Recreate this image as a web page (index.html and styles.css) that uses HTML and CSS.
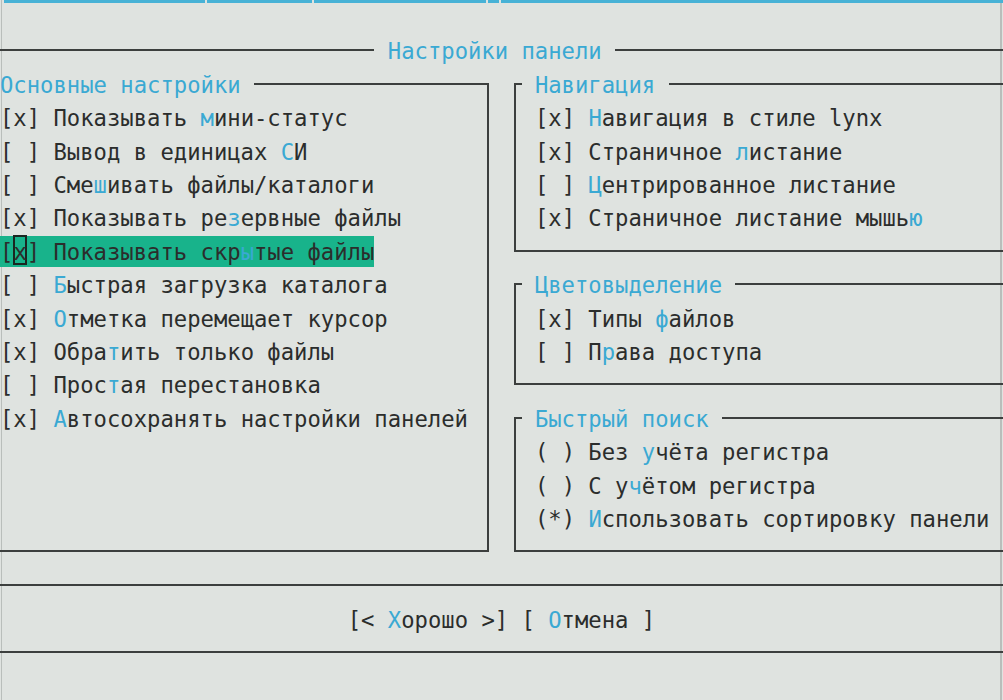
FILE: index.html
```html
<!DOCTYPE html>
<html lang="ru">
<head>
<meta charset="utf-8">
<title>Настройки панели</title>
<link rel="stylesheet" href="styles.css">
</head>
<body>
<div class="screen">
  <div class="strip"><i class="s1"></i><i class="s2"></i><i class="s3"></i><i class="s4"></i><i class="s5"></i></div>

  <div class="titlerow">
    <span class="tline tline-left"></span>
    <span class="dtitle">Настройки панели</span>
    <span class="tline tline-right"></span>
  </div>

  <div class="main">
    <div class="group-left">
      <div class="lhead"><span class="gtitle">Основные настройки</span><span class="lcorner"></span></div>
      <div class="lbody">
        <div class="item">[x] Показывать <b>м</b>ини-статус</div>
        <div class="item">[ ] Вывод в единицах <b>С</b>И</div>
        <div class="item">[ ] Сме<b>ш</b>ивать файлы/каталоги</div>
        <div class="item">[x] Показывать ре<b>з</b>ервные файлы</div>
        <div class="item selrow">[<span class="cur">x</span>] Показывать скр<b>ы</b>тые файлы</div>
        <div class="item">[ ] <b>Б</b>ыстрая загрузка каталога</div>
        <div class="item">[x] <b>О</b>тметка перемещает курсор</div>
        <div class="item">[x] Обра<b>т</b>ить только файлы</div>
        <div class="item">[ ] Прос<b>т</b>ая перестановка</div>
        <div class="item">[x] <b>А</b>втосохранять настройки панелей</div>
      </div>
    </div>

    <div class="rightcol">
      <div class="rgroup">
        <div class="rhead"><span class="rcorner"></span><span class="gtitle">Навигация</span><span class="rline"></span></div>
        <div class="rbody rows4">
          <div class="item">[x] <b>Н</b>авигация в стиле lynx</div>
          <div class="item">[x] Страничное <b>л</b>истание</div>
          <div class="item">[ ] <b>Ц</b>ентрированное листание</div>
          <div class="item">[x] Страничное листание мышь<b>ю</b></div>
        </div>
      </div>
      <div class="rgroup">
        <div class="rhead"><span class="rcorner"></span><span class="gtitle">Цветовыделение</span><span class="rline"></span></div>
        <div class="rbody rows2">
          <div class="item">[x] Типы <b>ф</b>айлов</div>
          <div class="item">[ ] П<b>р</b>ава доступа</div>
        </div>
      </div>
      <div class="rgroup">
        <div class="rhead"><span class="rcorner"></span><span class="gtitle">Быстрый поиск</span><span class="rline"></span></div>
        <div class="rbody rows3">
          <div class="item">( ) Без <b>у</b>чёта регистра</div>
          <div class="item">( ) С у<b>ч</b>ётом регистра</div>
          <div class="item">(*) <b>И</b>спользовать сортировку панели</div>
        </div>
      </div>
    </div>
  </div>

  <div class="sep"></div>
  <div class="buttons">[&lt; <b>Х</b>орошо &gt;] [ <b>О</b>тмена ]</div>
  <div class="sep"></div>
</div>
</body>
</html>
```

FILE: styles.css
```css
:root {
  --cw: 13.373px;
  --rh: 33.42px;
  --tp: 4px;
  --ln: #3c3f3e;
  --fg: #2b2d2c;
  --hk: #3aa9d3;
  --bg: #dfe3e0;
}

html, body {
  margin: 0;
  padding: 0;
}

body {
  background: var(--bg);
  font-family: "DejaVu Sans Mono", monospace;
  font-size: 22.21px;
  color: var(--fg);
  overflow: hidden;
}

.screen {
  width: 1003px;
  height: 700px;
  overflow: hidden;
  background:
    linear-gradient(90deg, transparent 1px, #b9bebb 1px, #b9bebb 2px, transparent 2px),
    linear-gradient(90deg, transparent 1000px, #b9bebb 1000px, #b9bebb 1002px, transparent 1002px),
    var(--bg);
}

b {
  font-weight: normal;
  color: var(--hk);
}

/* top cyan strip */
.strip {
  height: var(--rh);
  display: flex;
  gap: 2px;
  padding-left: 4px;
}
.strip i {
  display: block;
  height: 3px;
  background: #47b2d6;
}
.strip .s1 { width: 201px; }
.strip .s2 { width: 105px; }
.strip .s3 { width: 172px; }
.strip .s4 { width: 11px; }
.strip .s5 { flex: 1; }

/* dialog title row */
.titlerow {
  height: var(--rh);
  display: flex;
  align-items: center;
  white-space: pre;
}
.tline {
  height: 2px;
  background: var(--ln);
}
.tline-left { width: calc(var(--cw) * 28); }
.tline-right { flex: 1; }
.dtitle {
  color: var(--hk);
  margin: 0 var(--cw);
  height: var(--rh);
  box-sizing: border-box;
  padding-top: var(--tp);
  line-height: calc(var(--rh) - var(--tp));
}

.main {
  height: calc(var(--rh) * 15);
  display: flex;
}

.gtitle {
  color: var(--hk);
  white-space: pre;
  box-sizing: border-box;
  padding-top: var(--tp);
  line-height: calc(var(--rh) - var(--tp));
}

.item {
  height: var(--rh);
  box-sizing: border-box;
  padding-top: var(--tp);
  line-height: calc(var(--rh) - var(--tp));
  white-space: pre;
}

/* left group */
.group-left {
  width: calc(var(--cw) * 36.5 + 1px);
  display: flex;
  flex-direction: column;
}
.lhead {
  height: var(--rh);
  display: flex;
}
.lcorner {
  flex: 1;
  margin-left: var(--cw);
  align-self: flex-end;
  height: calc(var(--rh) / 2 + 1px);
  box-sizing: border-box;
  border-top: 2px solid var(--ln);
  border-right: 2px solid var(--ln);
}
.lbody {
  height: calc(var(--rh) * 13.5 + 1px);
  box-sizing: border-box;
  border-right: 2px solid var(--ln);
  border-bottom: 2px solid var(--ln);
}

.selrow {
  width: calc(var(--cw) * 28);
  background: #18b38b;
  background-clip: padding-box;
  border-top: 2px solid transparent;
  padding-top: calc(var(--tp) - 2px);
}
.cur {
  display: inline-block;
  vertical-align: top;
  margin-top: -3px;
  width: var(--cw);
  height: 30px;
  line-height: 35.4px;
  box-shadow: inset 0 0 0 2px #1b2621;
  text-align: center;
}

/* right column */
.rightcol {
  flex: 1;
  margin-left: calc(var(--cw) * 2 - 2px);
  display: flex;
  flex-direction: column;
  gap: calc(var(--rh) / 2 - 1px);
}
.rhead {
  height: var(--rh);
  display: flex;
}
.rcorner {
  width: calc(var(--cw) / 2 + 1px);
  margin-right: var(--cw);
  align-self: flex-end;
  height: calc(var(--rh) / 2 + 1px);
  box-sizing: border-box;
  border-top: 2px solid var(--ln);
  border-left: 2px solid var(--ln);
}
.rline {
  flex: 1;
  margin-left: var(--cw);
  align-self: flex-end;
  height: calc(var(--rh) / 2 + 1px);
  box-sizing: border-box;
  border-top: 2px solid var(--ln);
}
.rbody {
  box-sizing: border-box;
  border-left: 2px solid var(--ln);
  border-bottom: 2px solid var(--ln);
  padding-left: calc(var(--cw) * 1.5 - 1px);
}
.rows4 { height: calc(var(--rh) * 4.5 + 1px); }
.rows2 { height: calc(var(--rh) * 2.5 + 1px); }
.rows3 { height: calc(var(--rh) * 3.5 + 1px); }

/* separators and buttons */
.sep {
  height: var(--rh);
  display: flex;
  align-items: center;
}
.sep::before {
  content: "";
  flex: 1;
  height: 2px;
  background: var(--ln);
}
.buttons {
  height: var(--rh);
  box-sizing: border-box;
  padding-top: var(--tp);
  line-height: calc(var(--rh) - var(--tp));
  white-space: pre;
  padding-left: calc(var(--cw) * 26);
}
```
